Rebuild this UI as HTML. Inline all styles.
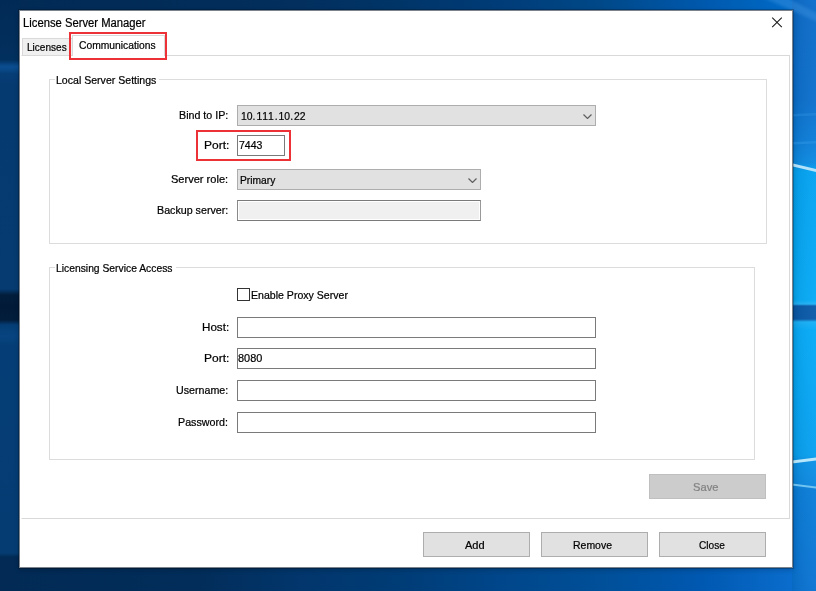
<!DOCTYPE html>
<html><head><meta charset="utf-8">
<style>
*{margin:0;padding:0;box-sizing:border-box}
html,body{width:816px;height:591px;overflow:hidden;background:#03305f}
body{position:relative;font-family:"Liberation Sans",sans-serif;font-size:11px;color:#000}
.a{position:absolute}
#bg{left:0;top:0;width:816px;height:591px;background:linear-gradient(90deg,#022a55 0px,#022c59 200px,#022f5e 300px,#003568 400px,#003c78 500px,#004888 600px,#0058ac 700px,#0068c4 780px,#0a6ecc 816px)}
#bstrip{left:0;top:568px;width:816px;height:23px;background:linear-gradient(90deg,#022a55 0px,#022d5a 200px,#02366c 300px,#003c76 400px,#00468a 500px,#004f98 600px,#0058b0 700px,#0a6ccc 790px,#0a72d2 816px)}
#lstrip{left:0;top:0;width:19px;height:591px;background:linear-gradient(180deg,#022a56 0px,#02305e 60px,#0a4c8e 66px,#0a4c8e 68px,#063e76 74px,#053a70 85px,#063b71 289px,#021d3c 295px,#011a38 307px,#021d3c 320px,#053e76 325px,#074480 336px,#053e76 346px,#053c72 553px,#022a55 557px,#022a55 591px)}
#win{left:19px;top:10px;width:774px;height:558px;background:#fff;border:1px solid rgba(45,55,70,0.62);box-shadow:0 0 0 1px rgba(0,0,0,0.22),0 2px 5px rgba(0,0,0,0.2)}
.t{position:absolute;white-space:nowrap;line-height:14px;height:14px;transform-origin:0 0;-webkit-text-stroke:0.22px currentColor}
.red{position:absolute;border:2px solid #ec3236}
.combo{position:absolute;background:#e1e1e1;border:1px solid #adadad;height:21px}
.tb{position:absolute;background:#fff;border:1px solid #7a7a7a;height:21px}
.btn{position:absolute;background:#e1e1e1;border:1px solid #adadad;height:25px}
.gb{position:absolute;border:1px solid #dcdcdc}
i{font-style:normal;margin-right:1px}
em{font-style:normal;letter-spacing:0.9px}
.chev{position:absolute;width:9px;height:5px}
</style></head><body>
<div id="bg" class="a"></div>
<div id="lstrip" class="a"></div>
<div id="bstrip" class="a"></div>
<svg class="a" style="left:792px;top:0" width="24" height="591" viewBox="0 0 24 591">
<defs>
<linearGradient id="rg" x1="0" y1="0" x2="0" y2="591" gradientUnits="userSpaceOnUse">
<stop offset="0.0000" stop-color="#0a6ccc"/>
<stop offset="0.0169" stop-color="#0a6ac8"/>
<stop offset="0.1692" stop-color="#0a6ecc"/>
<stop offset="0.2369" stop-color="#0a7cd8"/>
<stop offset="0.2758" stop-color="#0a8ae2"/>
<stop offset="0.2893" stop-color="#02a2f2"/>
<stop offset="0.5076" stop-color="#04aaf6"/>
<stop offset="0.5144" stop-color="#20b2f8"/>
<stop offset="0.5178" stop-color="#0858a8"/>
<stop offset="0.5398" stop-color="#0858a8"/>
<stop offset="0.5448" stop-color="#18b0f8"/>
<stop offset="0.5584" stop-color="#04aaf8"/>
<stop offset="0.7699" stop-color="#06a0f0"/>
<stop offset="0.7817" stop-color="#0a90e6"/>
<stop offset="0.8190" stop-color="#0a88e0"/>
<stop offset="0.8291" stop-color="#087cd8"/>
<stop offset="1.0000" stop-color="#0872d2"/>
</linearGradient>
<linearGradient id="rh" x1="0" y1="0" x2="24" y2="0" gradientUnits="userSpaceOnUse">
<stop offset="0" stop-color="#000" stop-opacity="0.08"/>
<stop offset="1" stop-color="#fff" stop-opacity="0.04"/>
</linearGradient>
<filter id="bl" x="-10%" y="-50%" width="120%" height="200%"><feGaussianBlur stdDeviation="0.7"/></filter>
</defs>
<rect x="0" y="0" width="24" height="591" fill="url(#rg)"/>
<rect x="0" y="0" width="24" height="591" fill="url(#rh)"/>
<g filter="url(#bl)">
<polygon points="0,114 24,113 24,115.5 0,116.5" fill="#3c9ae6" opacity="0.3"/>
<polygon points="0,142 24,141 24,143.5 0,144.5" fill="#3aa0ea" opacity="0.35"/>
<polygon points="1,163.5 24,169 24,172 1,166.5" fill="#b4e2fa"/>
<polygon points="0,460.5 24,457.5 24,460.5 0,463.5" fill="#b8e6fa"/>
<polygon points="0,483.5 24,486.5 24,488.5 0,485.5" fill="#70c4f2"/>
</g>
</svg>
<svg class="a" style="left:736px;top:0" width="80" height="40" viewBox="0 0 80 40">
<filter id="bl2" x="-20%" y="-50%" width="140%" height="200%"><feGaussianBlur stdDeviation="1.6"/></filter>
<g filter="url(#bl2)"><polygon points="28,-2 52,-2 82,14 82,22" fill="#3a92e0" opacity="0.45"/></g>
</svg>
<div id="win" class="a"></div>

<svg class="a" style="left:771px;top:16px" width="12" height="13" viewBox="0 0 12 13"><path d="M1.2 1.6L10.8 11.2M10.8 1.6L1.2 11.2" stroke="#1a1a1a" stroke-width="1.05"/></svg>

<div class="a" style="left:22px;top:38px;width:52px;height:18px;background:#f0f0f0;border:1px solid #d9d9d9;border-bottom:none"></div>
<div class="a" style="left:21px;top:55px;width:769px;height:464px;border:1px solid #d9d9d9;border-left-color:#fff"></div>
<div class="a" style="left:72px;top:35px;width:93px;height:21px;background:#fff;border:1px solid #d9d9d9;border-bottom:none"></div>

<div class="gb" style="left:49px;top:79px;width:718px;height:165px"></div>
<div class="a" style="left:55px;top:77px;width:104px;height:4px;background:#fff"></div>

<div class="combo" style="left:237px;top:105px;width:359px"></div>
<svg class="chev" style="left:583px;top:114px" viewBox="0 0 9 5"><path d="M0.5 0.5L4.5 4.5L8.5 0.5" fill="none" stroke="#606060" stroke-width="1.2"/></svg>
<div class="tb" style="left:237px;top:135px;width:48px"></div>
<div class="combo" style="left:237px;top:169px;width:244px"></div>
<svg class="chev" style="left:468px;top:178px" viewBox="0 0 9 5"><path d="M0.5 0.5L4.5 4.5L8.5 0.5" fill="none" stroke="#606060" stroke-width="1.2"/></svg>
<div class="tb" style="left:237px;top:200px;width:244px;background:#f0f0f0;border-color:#7a7a7a #999 #7a7a7a #8a8a8a;box-shadow:inset 0 0 0 1px #fff"></div>

<div class="gb" style="left:49px;top:267px;width:706px;height:193px"></div>
<div class="a" style="left:55px;top:265px;width:121px;height:4px;background:#fff"></div>

<div class="a" style="left:237px;top:288px;width:13px;height:13px;border:1px solid #333;background:#fff"></div>
<div class="tb" style="left:237px;top:317px;width:359px"></div>
<div class="tb" style="left:237px;top:348px;width:359px"></div>
<div class="tb" style="left:237px;top:380px;width:359px"></div>
<div class="tb" style="left:237px;top:412px;width:359px"></div>

<div class="btn" style="left:649px;top:474px;width:117px;background:#cccccc;border-color:#bfbfbf"></div>
<div class="btn" style="left:423px;top:532px;width:107px"></div>
<div class="btn" style="left:541px;top:532px;width:107px"></div>
<div class="btn" style="left:659px;top:532px;width:107px"></div>

<div class="red" style="left:69px;top:32px;width:98px;height:28px"></div>
<div class="red" style="left:196px;top:130px;width:95px;height:31px"></div>
<div class="t" style="left:23.30px;top:16.00px;font-size:12px;color:#000;transform:scaleX(0.9379)">License Server Manager</div>
<div class="t" style="left:27.45px;top:40.00px;font-size:11px;color:#000;transform:scaleX(0.9134)">Licenses</div>
<div class="t" style="left:78.80px;top:38.00px;font-size:11px;color:#000;transform:scaleX(0.9358)">Communications</div>
<div class="t" style="left:56.45px;top:73.00px;font-size:11px;color:#000;transform:scaleX(0.9602)">Local Server Settings</div>
<div class="t" style="left:179.45px;top:108.00px;font-size:11px;color:#000;transform:scaleX(0.9714)">Bind to IP:</div>
<div class="t" style="left:241.37px;top:109.00px;font-size:11px;color:#000;transform:scaleX(0.9446)">10<i>.</i><em>111</em><i>.</i>10<i>.</i>22</div>
<div class="t" style="left:203.68px;top:138.00px;font-size:11px;color:#000;transform:scaleX(1.0890)">Port:</div>
<div class="t" style="left:239.32px;top:138.00px;font-size:11px;color:#000;transform:scaleX(0.9546)">7443</div>
<div class="t" style="left:171.30px;top:172.00px;font-size:11px;color:#000;transform:scaleX(1.0046)">Server role:</div>
<div class="t" style="left:239.58px;top:173.00px;font-size:11px;color:#000;transform:scaleX(0.9321)">Primary</div>
<div class="t" style="left:156.72px;top:203.00px;font-size:11px;color:#000;transform:scaleX(0.9713)">Backup server:</div>
<div class="t" style="left:55.57px;top:261.00px;font-size:11px;color:#000;transform:scaleX(0.9384)">Licensing Service Access</div>
<div class="t" style="left:251.29px;top:288.00px;font-size:11px;color:#000;transform:scaleX(0.9607)">Enable Proxy Server</div>
<div class="t" style="left:201.67px;top:320.00px;font-size:11px;color:#000;transform:scaleX(1.0560)">Host:</div>
<div class="t" style="left:203.57px;top:351.00px;font-size:11px;color:#000;transform:scaleX(1.0903)">Port:</div>
<div class="t" style="left:238.30px;top:351.00px;font-size:11px;color:#000;transform:scaleX(0.9913)">8080</div>
<div class="t" style="left:176.27px;top:383.00px;font-size:11px;color:#000;transform:scaleX(0.9698)">Username:</div>
<div class="t" style="left:178.31px;top:415.00px;font-size:11px;color:#000;transform:scaleX(0.9724)">Password:</div>
<div class="t" style="left:692.75px;top:480.00px;font-size:11px;color:#838383;transform:scaleX(1.0169)">Save</div>
<div class="t" style="left:465.30px;top:538.00px;font-size:11px;color:#000;transform:scaleX(1.0028)">Add</div>
<div class="t" style="left:573.47px;top:538.00px;font-size:11px;color:#000;transform:scaleX(0.9515)">Remove</div>
<div class="t" style="left:698.52px;top:538.00px;font-size:11px;color:#000;transform:scaleX(0.9181)">Close</div>
</body></html>
